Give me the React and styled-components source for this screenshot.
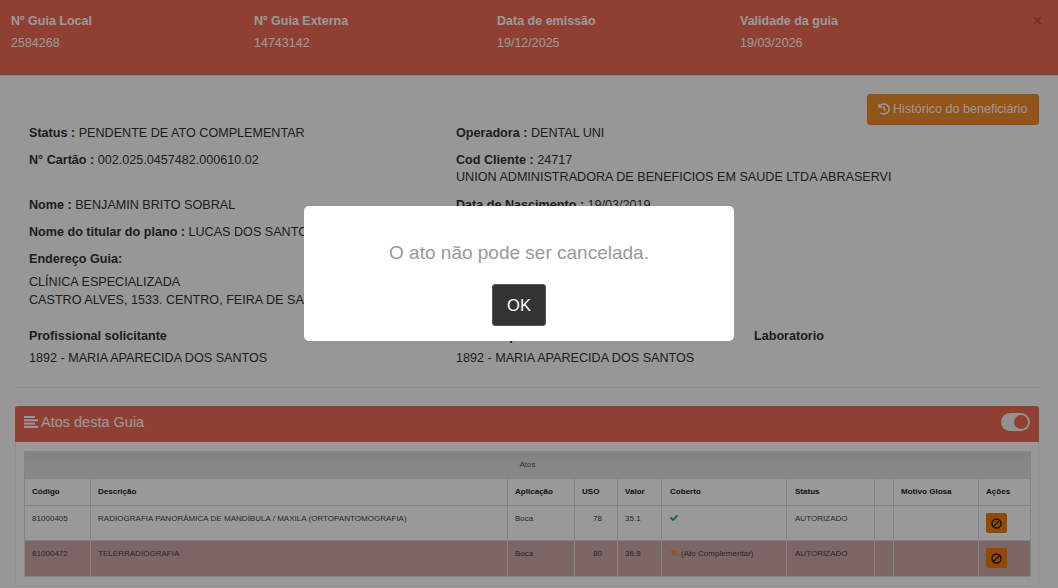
import React from "react";
import styled, { createGlobalStyle } from "styled-components";
import { FaHistory, FaCheck, FaTimes } from "react-icons/fa";

const Global = createGlobalStyle`
  html, body { margin: 0; padding: 0; height: 100%; overflow: hidden; background: #fcfcfc; }
  body { font-family: "Liberation Sans", Arial, sans-serif; font-size: 12.6px; color: #333; }
  * { box-sizing: border-box; }
`;

const Header = styled.header`
  display: flex; height: 76px; padding: 14px 0 0 11px;
  background: #ee6b55; border-bottom: 1px solid #e0e0e0; position: relative; color: #fff; font-size: 12.5px;
`;
const HeaderCol = styled.div`width: 243px; line-height: 15px;`;
const HeaderLabel = styled.div`font-weight: 700; margin-bottom: 7px;`;
const Close = styled.span`
  position: absolute; top: 12px; right: 16px; font-size: 16px; line-height: 18px; font-weight: 400; color: #000; opacity: .3;
`;

const Content = styled.main`padding: 18px 19px 0 15px;`;
const ActionBar = styled.div`display: flex; justify-content: flex-end;`;
const OrangeButton = styled.button`
  display: inline-flex; align-items: center; gap: 3px; width: 172px; height: 31px; padding: 0 0 2px 10px;
  background: #f58c2a; border: 1px solid #ec8420; border-radius: 3px; color: #fff;
  font: 400 12.6px "Liberation Sans", Arial, sans-serif; white-space: nowrap;
`;

const InfoGrid = styled.div`
  display: grid; grid-template-columns: 427px 298px 1fr; row-gap: 13px; padding: 1px 0 0 14px; line-height: 14px;
`;
const Field = styled.div`white-space: nowrap; grid-column: ${p => p.$col || "auto"};`;
const Bold = styled.b`font-weight: 700;`;
const SubLine = styled.div`margin-top: 3px; line-height: 15px;`;
const Address = styled.div`margin-top: 7px; line-height: 18px;`;
const Stack = styled.div`margin-top: 7px;`;
const StackValue = styled.div`margin-top: 8px;`;
const Rule = styled.hr`margin: 22px 0 18px; border: 0; border-top: 1px solid #e6e6e6;`;

const Panel = styled.section`
  height: 180px; background: #fff; border: 1px solid #eee; border-top: 0; border-radius: 3px;
`;
const PanelHead = styled.div`
  display: flex; align-items: center; justify-content: space-between; height: 36px; margin: 0 -1px; padding: 0 9px 4px 9px;
  background: #ee6b55; border-radius: 3px 3px 0 0; color: #fff; font-size: 14.5px;
`;
const PanelTitle = styled.div`display: flex; align-items: center; gap: 2px;`;
const Toggle = styled.span`
  display: flex; align-items: center; justify-content: flex-end; width: 29px; height: 18px; padding-right: 2px;
  background: #f4f4f4; border-radius: 9px;
`;
const Knob = styled.span`width: 14px; height: 14px; border-radius: 50%; background: #ee6b55;`;
const PanelBody = styled.div`padding: 9px 9px 0 8px;`;

const Table = styled.table`
  width: 1006px; table-layout: fixed; border-collapse: collapse; font-size: 8.05px; line-height: 10px; color: #444;
`;
const Caption = styled.th`
  height: 27px; font-weight: 400; text-align: center; border: 1px solid #ddd; color: #555;
  background: linear-gradient(#dcdcdc, #e4e4e4);
`;
const Th = styled.th`
  height: 27px; padding: 0 7px 0 ${p => p.$pl || 7}px; text-align: left; font-weight: 700; color: #222; border: 1px solid #ddd; white-space: nowrap;
`;
const Row = styled.tr`background: ${p => (p.$denied ? "#cea9a9" : "#fff")};`;
const Td = styled.td`
  padding: 8px ${p => (p.$align === "right" ? 15 : 7)}px 0 ${p => p.$pl || 7}px; height: ${p => p.$h || 35}px; vertical-align: top; border: 1px solid #ddd;
  text-align: ${p => p.$align || "left"}; white-space: nowrap;
`;
const BanButton = styled.span`
  display: flex; align-items: center; justify-content: center; width: 21px; height: 20px; margin-top: -1px;
  background: #f57c00; border: 1px solid #ee7a08; border-radius: 2px; color: #222;
`;
const Ok = styled(FaCheck)`color: #14a05c; font-size: 8px; stroke: currentColor; stroke-width: 20px;`;
const No = styled(FaTimes)`color: #f58c2a; font-size: 8px; margin-right: 3px; vertical-align: -1px; stroke: currentColor; stroke-width: 30px;`;

const Overlay = styled.div`
  position: fixed; inset: 0; display: flex; align-items: center; justify-content: center;
  padding: 0 20px 41px 0; background: rgba(0,0,0,.4);
`;
const Modal = styled.div`
  display: flex; flex-direction: column; align-items: center; width: 430px; height: 135px; padding-top: 37px;
  background: #fff; border-radius: 5px;
`;
const ModalText = styled.div`font-size: 19px; line-height: 20px; color: #999;`;
const ModalButton = styled.button`
  width: 54px; height: 42px; margin-top: 21px; background: #333; color: #fff; border: 1px solid #555; border-radius: 3px;
  font: 400 16.5px "Liberation Sans", Arial, sans-serif;
`;

const BarsIcon = () => (
  <svg width="15" height="12" viewBox="0 0 15 12" fill="currentColor" aria-hidden="true">
    <rect x="0" y="0" width="11" height="2" />
    <rect x="0" y="3.3" width="14" height="2" />
    <rect x="0" y="6.6" width="11" height="2" />
    <rect x="0" y="9.9" width="14" height="2" />
  </svg>
);
const BanIcon = () => (
  <svg width="11" height="11" viewBox="0 0 11 11" fill="none" stroke="currentColor" strokeWidth="1.5" aria-hidden="true">
    <circle cx="5.5" cy="5.5" r="4.5" />
    <line x1="2.5" y1="8.5" x2="8.5" y2="2.5" />
  </svg>
);

const headerCols = [
  ["Nº Guia Local", "2584268"],
  ["Nº Guia Externa", "14743142"],
  ["Data de emissão", "19/12/2025"],
  ["Validade da guia", "19/03/2026"],
];
const cols = [66, 417, 67, 43, 44, 125, 88, 19, 85, 52];
const heads = ["Código", "Descrição", "Aplicação", "USO", "Valor", "Coberto", "Status", "", "Motivo Glosa", "Ações"];
const rows = [
  { code: "81000405", desc: "RADIOGRAFIA PANORÂMICA DE MANDÍBULA / MAXILA (ORTOPANTOMOGRAFIA)", uso: 78, valor: "35.1", cover: <Ok />, h: 35 },
  { code: "81000472", desc: "TELERRADIOGRAFIA", uso: 80, valor: "36.8", cover: <><No />(Ato Complementar)</>, denied: true, h: 36 },
];

export default function App() {
  return (
    <>
      <Global />
      <Header>
        {headerCols.map(([l, v]) => (
          <HeaderCol key={l}><HeaderLabel>{l}</HeaderLabel><div>{v}</div></HeaderCol>
        ))}
        <Close>×</Close>
      </Header>
      <Content>
        <ActionBar>
          <OrangeButton><FaHistory size={12} />Histórico do beneficiário</OrangeButton>
        </ActionBar>
        <InfoGrid>
          <Field><Bold>Status : </Bold>PENDENTE DE ATO COMPLEMENTAR</Field>
          <Field $col="2 / 4"><Bold>Operadora : </Bold>DENTAL UNI</Field>
          <Field><Bold>N° Cartão : </Bold>002.025.0457482.000610.02</Field>
          <Field $col="2 / 4">
            <Bold>Cod Cliente : </Bold>24717
            <SubLine>UNION ADMINISTRADORA DE BENEFICIOS EM SAUDE LTDA ABRASERVI</SubLine>
          </Field>
          <Field><Bold>Nome : </Bold>BENJAMIN BRITO SOBRAL</Field>
          <Field $col="2 / 4"><Bold>Data de Nascimento : </Bold>19/03/2019</Field>
          <Field $col="1 / 4"><Bold>Nome do titular do plano : </Bold>LUCAS DOS SANTOS</Field>
          <Field $col="1 / 4">
            <Bold>Endereço Guia:</Bold>
            <Address>CLÍNICA ESPECIALIZADA<br />CASTRO ALVES, 1533. CENTRO, FEIRA DE SANTANA</Address>
          </Field>
          <Stack>
            <Bold>Profissional solicitante</Bold>
            <StackValue>1892 - MARIA APARECIDA DOS SANTOS</StackValue>
          </Stack>
          <Stack>
            <Bold>Dentista prestador</Bold>
            <StackValue>1892 - MARIA APARECIDA DOS SANTOS</StackValue>
          </Stack>
          <Stack><Bold>Laboratorio</Bold></Stack>
        </InfoGrid>
        <Rule />
        <Panel>
          <PanelHead>
            <PanelTitle><BarsIcon />Atos desta Guia</PanelTitle>
            <Toggle><Knob /></Toggle>
          </PanelHead>
          <PanelBody>
            <Table>
              <colgroup>{cols.map((w, i) => <col key={i} width={w} />)}</colgroup>
              <thead>
                <tr><Caption colSpan={10}>Atos</Caption></tr>
                <tr>{heads.map((h, i) => <Th key={i} $pl={i === 5 || i === 6 ? 8 : 7}>{h}</Th>)}</tr>
              </thead>
              <tbody>
                {rows.map(r => (
                  <Row key={r.code} $denied={r.denied}>
                    <Td $h={r.h}>{r.code}</Td>
                    <Td $h={r.h}>{r.desc}</Td>
                    <Td $h={r.h}>Boca</Td>
                    <Td $h={r.h} $align="right">{r.uso}</Td>
                    <Td $h={r.h}>{r.valor}</Td>
                    <Td $h={r.h} $pl={8}>{r.cover}</Td>
                    <Td $h={r.h} $pl={8}>AUTORIZADO</Td>
                    <Td $h={r.h} />
                    <Td $h={r.h} />
                    <Td $h={r.h}><BanButton><BanIcon /></BanButton></Td>
                  </Row>
                ))}
              </tbody>
            </Table>
          </PanelBody>
        </Panel>
      </Content>
      <Overlay>
        <Modal>
          <ModalText>O ato não pode ser cancelada.</ModalText>
          <ModalButton>OK</ModalButton>
        </Modal>
      </Overlay>
    </>
  );
}
